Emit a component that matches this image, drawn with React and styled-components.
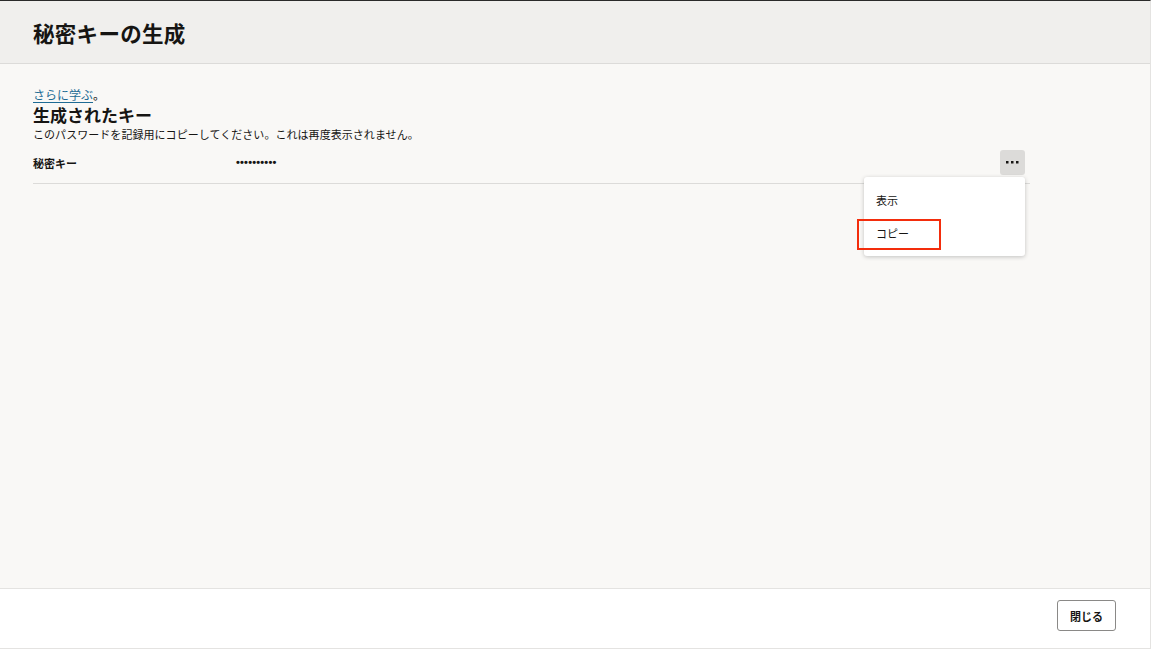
import React from "react";
import styled, { createGlobalStyle } from "styled-components";

const GlobalStyle = createGlobalStyle`
  html, body {
    margin: 0;
    padding: 0;
    height: 100%;
  }
  body {
    font-family: "Noto Sans CJK JP", "Noto Sans", sans-serif;
    color: #161513;
  }
  #root {
    height: 100%;
  }
`;

const Page = styled.div`
  height: 649px;
  display: flex;
  flex-direction: column;
  border-top: 1px solid #2a2a2a;
  border-right: 1px solid #e4e3e1;
  box-sizing: border-box;
  background: #f9f8f6;
`;

const Header = styled.header`
  height: 62px;
  background: #f0efed;
  border-bottom: 1px solid #dcdbd9;
  display: flex;
  align-items: center;
  padding: 0 33px;
  flex-shrink: 0;
`;

const Title = styled.h1`
  margin: 0;
  font-size: 21.5px;
  font-weight: 700;
  letter-spacing: 0.3px;
`;

const Body = styled.main`
  flex: 1;
  padding: 23px 33px 0 33px;
`;

const Content = styled.div`
  width: 997px;
`;

const LearnLine = styled.div`
  font-size: 12px;
  line-height: 16px;
  color: #161513;
`;

const Link = styled.a`
  color: #1e6b94;
  text-decoration: underline;
  text-underline-offset: 2px;
`;

const SectionTitle = styled.h2`
  margin: 1px 0 0 0;
  font-size: 17px;
  line-height: 22px;
  font-weight: 700;
`;

const Description = styled.p`
  margin: 0;
  font-size: 11px;
  line-height: 16px;
  color: #161513;
  letter-spacing: 0.05px;
`;

const Row = styled.div`
  position: relative;
  display: flex;
  align-items: center;
  height: 34px;
  margin-top: 5px;
  border-bottom: 1px solid #dcdbd9;
  padding-bottom: 2px;
`;

const Label = styled.div`
  width: 203px;
  font-size: 11px;
  font-weight: 700;
  margin-top: -2px;
`;

const Masked = styled.div`
  flex: 1;
  font-size: 11px;
  letter-spacing: 0.2px;
  font-family: "Liberation Sans", sans-serif;
  font-weight: 700;
  margin-top: -4px;
`;

const MoreButton = styled.button`
  width: 25px;
  height: 25px;
  border: none;
  border-radius: 3px;
  background: #dcdbd9;
  display: flex;
  align-items: center;
  justify-content: center;
  padding: 0;
  margin-right: 5px;
  margin-top: -4px;
  cursor: pointer;
`;

const Menu = styled.div`
  position: absolute;
  top: 30px;
  right: 5px;
  width: 161px;
  padding: 6px 0 7px 0;
  background: #ffffff;
  border-radius: 3px;
  box-shadow: 0 1px 4px rgba(0, 0, 0, 0.22);
  z-index: 2;
`;

const MenuItem = styled.div`
  position: relative;
  height: 33px;
  display: flex;
  align-items: center;
  padding-left: 12px;
  font-size: 11px;
  color: #161513;
`;

const Highlight = styled.span`
  position: absolute;
  left: -7px;
  top: 3px;
  width: 84px;
  height: 31px;
  border: 2.5px solid #f32d0c;
  box-sizing: border-box;
`;

const Footer = styled.footer`
  height: 61px;
  background: #ffffff;
  border-top: 1px solid #e4e3e1;
  border-bottom: 1px solid #e4e3e1;
  display: flex;
  align-items: flex-start;
  justify-content: flex-end;
  padding: 11px 34px 0 34px;
  box-sizing: border-box;
  flex-shrink: 0;
`;

const CloseButton = styled.button`
  height: 31px;
  padding: 0 12px;
  background: #ffffff;
  border: 1px solid #8a8987;
  border-radius: 3px;
  font-family: "Noto Sans CJK JP", sans-serif;
  font-size: 11px;
  font-weight: 700;
  color: #161513;
  cursor: pointer;
`;

const Dots = () => (
  <svg width="13" height="3" viewBox="0 0 13 3">
    <rect x="0" y="0" width="2.5" height="2.5" fill="#161513" />
    <rect x="5" y="0" width="2.5" height="2.5" fill="#161513" />
    <rect x="10" y="0" width="2.5" height="2.5" fill="#161513" />
  </svg>
);

export default function App() {
  return (
    <>
      <GlobalStyle />
      <Page>
        <Header>
          <Title>秘密キーの生成</Title>
        </Header>
        <Body>
          <Content>
            <LearnLine>
              <Link href="#">さらに学ぶ</Link>。
            </LearnLine>
            <SectionTitle>生成されたキー</SectionTitle>
            <Description>
              このパスワードを記録用にコピーしてください。これは再度表示されません。
            </Description>
            <Row>
              <Label>秘密キー</Label>
              <Masked>••••••••••</Masked>
              <MoreButton aria-label="アクション">
                <Dots />
              </MoreButton>
              <Menu>
                <MenuItem>表示</MenuItem>
                <MenuItem>
                  <Highlight />
                  コピー
                </MenuItem>
              </Menu>
            </Row>
          </Content>
        </Body>
        <Footer>
          <CloseButton>閉じる</CloseButton>
        </Footer>
      </Page>
    </>
  );
}
